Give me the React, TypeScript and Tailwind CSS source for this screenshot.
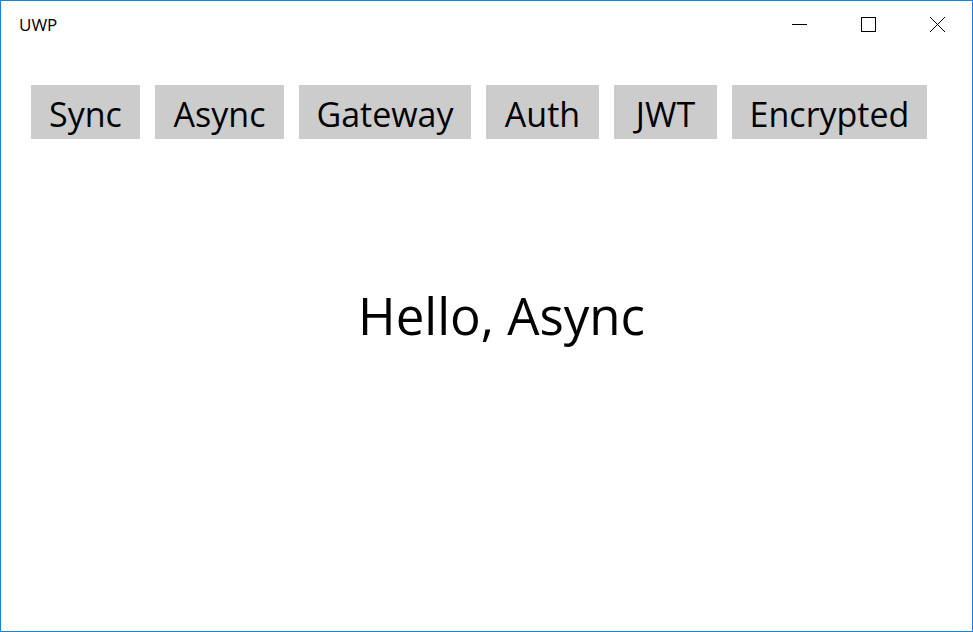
import React from 'react';

const tabs = [
    { label: 'Sync', w: 'w-[109px]' },
    { label: 'Async', w: 'w-[129px]' },
    { label: 'Gateway', w: 'w-[172px]' },
    { label: 'Auth', w: 'w-[113px]' },
    { label: 'JWT', w: 'w-[103px]' },
    { label: 'Encrypted', w: 'w-[195px]' },
];

const font = { fontFamily: '"Open Sans", "Noto Sans", sans-serif' };

export default function App() {
    return (
        <div className="w-[973px] h-[632px] border border-[#1883d7] bg-white flex flex-col text-black overflow-hidden" style={font}>
            {/* title bar */}
            <div className="h-[47px] flex items-stretch shrink-0">
                <div className="flex-1 flex items-center pl-[18px] text-[17px] leading-none pb-[1px]">UWP</div>
                <div className="w-[69px] flex items-center justify-center">
                    <svg width="15" height="15" viewBox="0 0 15 15">
                        <line x1="0" y1="7.5" x2="15" y2="7.5" stroke="#000" strokeWidth="1" />
                    </svg>
                </div>
                <div className="w-[69px] flex items-center justify-center">
                    <svg width="15" height="15" viewBox="0 0 15 15">
                        <rect x="0.5" y="0.5" width="14" height="14" fill="none" stroke="#000" strokeWidth="1" />
                    </svg>
                </div>
                <div className="w-[69px] flex items-center justify-center">
                    <svg width="15" height="15" viewBox="0 0 15 15">
                        <path d="M0 0 L15 15 M15 0 L0 15" stroke="#000" strokeWidth="1" />
                    </svg>
                </div>
            </div>

            {/* tab buttons */}
            <div className="flex gap-[15px] pl-[30px] mt-[37px]">
                {tabs.map((t) => (
                    <div key={t.label} className={`${t.w} h-[54px] bg-[#cccccc] flex items-center justify-center pt-[3px] text-[34px] leading-none`}>
                        {t.label}
                    </div>
                ))}
            </div>

            {/* content */}
            <div className="flex justify-center pl-[30px] mt-[151px]">
                <div className="text-[51px] leading-none">Hello, Async</div>
            </div>
        </div>
    );
}
